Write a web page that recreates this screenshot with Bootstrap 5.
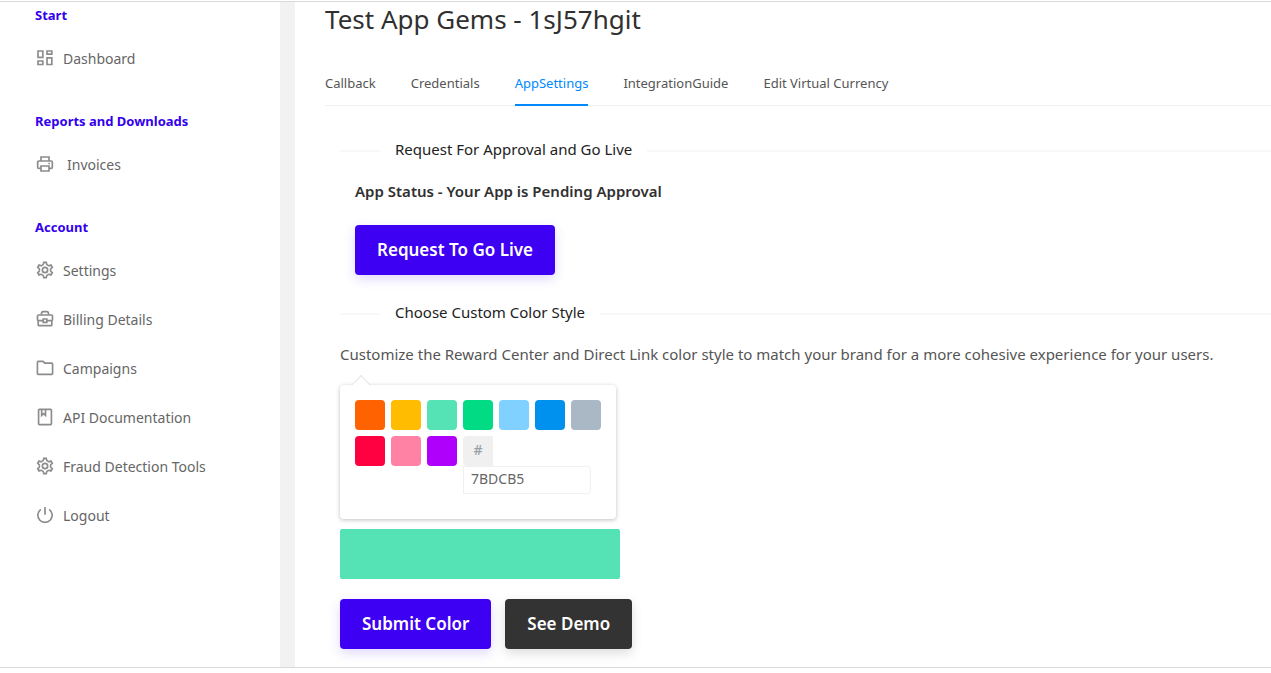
<!DOCTYPE html>
<html lang="en">
<head>
<meta charset="utf-8">
<meta name="viewport" content="width=device-width, initial-scale=1">
<title>Test App Gems - App Settings</title>
<link href="https://cdn.jsdelivr.net/npm/bootstrap@5.3.0/dist/css/bootstrap.min.css" rel="stylesheet">
<style>
  body { font-family: "Noto Sans", "Open Sans", sans-serif; font-size: 15px; line-height: 22px; color: #555; background: #fff; }
  .app-shell { margin-top: 1px; border-top: 1px solid #d9d9d9; border-bottom: 1px solid #d9d9d9; overflow: hidden; }
  .side-menu { width: 295px; border-right: 15px solid #f2f2f2; padding: 0 35px; font-size: 14px; }
  .side-heading { font-size: 13px; font-weight: 700; line-height: 18px; color: #3300ee; margin: 0; padding: 29px 0 10px; }
  .side-heading:first-child { padding-top: 4px; }
  .side-link { display: flex; align-items: center; gap: 8px; height: 49px; color: #666; text-decoration: none; white-space: nowrap; }
  .side-link:hover { color: #3d00f2; }
  .side-link svg { width: 20px; height: 20px; flex: none; fill: none; stroke: #8c8c8c; stroke-width: 2; margin-bottom: 2px; }
  .main-area { padding-left: 30px; min-width: 0; }
  .page-title { font-size: 26px; line-height: 34px; font-weight: 400; color: #303030; margin: 0 0 37px; }
  .app-tabs { gap: 35px; border-bottom: 1px solid #f0f0f0; font-size: 13px; line-height: 20px; }
  .app-tabs .nav-link { color: #555; padding: 0 0 11px; border-bottom: 2px solid transparent; margin-bottom: -1px; }
  .app-tabs .nav-link.active { color: #0088ff; border-color: #0088ff; }
  .panel-body { padding: 32px 0 18px 15px; }
  .rule-title { display: flex; align-items: center; gap: 15px; margin: 0; font-size: 15px; line-height: 22px; font-weight: 400; color: #222; white-space: nowrap; }
  .rule-title::before, .rule-title::after { content: ""; height: 2px; margin-top: 4px; background: #f8f8f8; }
  .rule-title::before { width: 40px; }
  .rule-title::after { flex: 1; }
  .status-block { padding: 20px 15px 26px; }
  .status-text { font-weight: 600; color: #303030; margin-bottom: 23px; }
  .btn-app { height: 50px; padding: 0 22px; border: 0; border-radius: 4px; font-size: 17px; font-weight: 600; color: #fff; background: #3d00f2; box-shadow: 0 4px 12px rgba(61, 0, 242, .16); }
  .btn-app:hover { color: #fff; background: #3200cc; }
  .btn-dark-app { background: #333; box-shadow: 0 4px 12px rgba(0, 0, 0, .14); }
  .btn-dark-app:hover { background: #222; }
  .action-row { gap: 14px; }
  .picker { position: relative; width: 276px; padding: 15px 15px 25px; border-radius: 4px; background: #fff; box-shadow: 0 1px 4px rgba(0, 0, 0, .25); margin: 20px 0 10px; }
  .picker::before { content: ""; position: absolute; left: 14px; top: -7px; width: 14px; height: 14px; background: #fff; border: solid #e5e5e5; border-width: 1px 0 0 1px; transform: rotate(45deg); }
  .swatches { display: flex; flex-wrap: wrap; gap: 6px; }
  .swatch { width: 30px; height: 30px; padding: 0; border: 0; border-radius: 4px; }
  .hex-field { width: 128px; }
  .hex-field label { display: block; width: 30px; height: 30px; line-height: 28px; text-align: center; font-size: 14px; font-weight: 500; color: #98a1a4; background: #f0f0f0; border-radius: 4px 0 0 4px; }
  .hex-field input { display: block; width: 128px; height: 28px; padding: 0 7px 4px; border: 1px solid #f0f0f0; border-radius: 0 4px 4px 0; font-size: 14px; color: #666; }
  .color-preview { width: 280px; height: 50px; border-radius: 2px; background: #55e3b5; margin-bottom: 20px; }
</style>
<script src="https://cdn.jsdelivr.net/npm/bootstrap@5.3.0/dist/js/bootstrap.bundle.min.js" defer></script>
</head>
<body>
<div class="app-shell d-flex">
  <nav class="side-menu flex-shrink-0" aria-label="Main menu">
    <h2 class="side-heading">Start</h2>
    <a class="side-link" href="#"><svg viewBox="0 0 24 24"><path d="M3.600 3.600h5.800v7.600H3.600zM14.400 3.600h5.800v3.800h-5.800zM3.600 15.600h5.800v4.200H3.600zM14.400 11.800h5.800v8h-5.800z"/></svg>Dashboard</a>
    <h2 class="side-heading">Reports and Downloads</h2>
    <a class="side-link" href="#"><svg viewBox="0 0 24 24"><path d="M7.200 8V3.600h9.600V8M7 17.200H4.500q-1.300 0-1.300-1.300V9.700q0-1.300 1.300-1.300h15q1.300 0 1.300 1.300v6.200q0 1.300-1.300 1.300H17M7.200 14.400h9.600v6H7.200zM16 11.400h2"/></svg><span class="ps-1">Invoices</span></a>
    <h2 class="side-heading">Account</h2>
    <a class="side-link" href="#"><svg viewBox="0 0 24 24"><defs><path id="tooth" d="M8.600 6.100Q9.900 5.800 10.100 4.700l.4-1.900h3l.4 1.900q.2 1.100 1.500 1.400"/><g id="gear"><use href="#tooth"/><use href="#tooth" transform="rotate(60 12 12)"/><use href="#tooth" transform="rotate(120 12 12)"/><use href="#tooth" transform="rotate(180 12 12)"/><use href="#tooth" transform="rotate(240 12 12)"/><use href="#tooth" transform="rotate(300 12 12)"/><circle cx="12" cy="12" r="3.200"/></g></defs><use href="#gear"/></svg>Settings</a>
    <a class="side-link" href="#"><svg viewBox="0 0 24 24"><path d="M7.800 7.200V5.400Q7.800 3.200 10 3.200h4q2.200 0 2.200 2.200v1.800M9.800 14H4.200q-1.200 0-1.200-1.200V8.400q0-1.200 1.200-1.200h15.600q1.200 0 1.200 1.200v4.400q0 1.200-1.200 1.200h-5.600M3.800 14v4.800q0 1.200 1.200 1.200h14q1.200 0 1.200-1.200V14M9.800 12h4.400v4H9.800z"/></svg>Billing Details</a>
    <a class="side-link" href="#"><svg viewBox="0 0 24 24"><path d="M2.900 5q0-1 1-1h5.700l2.200 2.200h8.300q1 0 1 1v11.500q0 1-1 1H3.900q-1 0-1-1z"/></svg>Campaigns</a>
    <a class="side-link" href="#"><svg viewBox="0 0 24 24"><path d="M4.300 3.900q0-1 1-1h13.400q1 0 1 1v16.200q0 1-1 1H5.300q-1 0-1-1zM8 3v7l2.300-2 2.300 2V3"/></svg>API Documentation</a>
    <a class="side-link" href="#"><svg viewBox="0 0 24 24"><use href="#gear"/></svg>Fraud Detection Tools</a>
    <a class="side-link" href="#"><svg viewBox="0 0 24 24"><path d="M12 2.500v9.300M7 5.200a8.600 8.600 0 1 0 10 0"/></svg>Logout</a>
  </nav>
  <main class="main-area flex-grow-1">
    <h1 class="page-title">Test App Gems - 1sJ57hgit</h1>
    <ul class="nav app-tabs">
      <li class="nav-item"><a class="nav-link" href="#">Callback</a></li>
      <li class="nav-item"><a class="nav-link" href="#">Credentials</a></li>
      <li class="nav-item"><a class="nav-link active" aria-current="page" href="#">AppSettings</a></li>
      <li class="nav-item"><a class="nav-link" href="#">IntegrationGuide</a></li>
      <li class="nav-item"><a class="nav-link" href="#">Edit Virtual Currency</a></li>
    </ul>
    <div class="panel-body">
      <h2 class="rule-title">Request For Approval and Go Live</h2>
      <div class="status-block">
        <p class="status-text">App Status - Your App is Pending Approval</p>
        <button type="button" class="btn btn-app d-block">Request To Go Live</button>
      </div>
      <h2 class="rule-title">Choose Custom Color Style</h2>
      <p class="mb-0 mt-3 pt-1">Customize the Reward Center and Direct Link color style to match your brand for a more cohesive experience for your users.</p>
      <div class="picker">
        <div class="swatches">
          <button type="button" class="swatch" style="background:#ff6200" aria-label="Orange"></button>
          <button type="button" class="swatch" style="background:#ffbc00" aria-label="Amber"></button>
          <button type="button" class="swatch" style="background:#55e3b5" aria-label="Mint"></button>
          <button type="button" class="swatch" style="background:#00db84" aria-label="Green"></button>
          <button type="button" class="swatch" style="background:#80d1ff" aria-label="Sky"></button>
          <button type="button" class="swatch" style="background:#0090ed" aria-label="Blue"></button>
          <button type="button" class="swatch" style="background:#aab7c5" aria-label="Gray"></button>
          <button type="button" class="swatch" style="background:#ff0040" aria-label="Red"></button>
          <button type="button" class="swatch" style="background:#ff82a5" aria-label="Pink"></button>
          <button type="button" class="swatch" style="background:#ae00fb" aria-label="Purple"></button>
          <div class="hex-field">
            <label for="hex">#</label>
            <input id="hex" type="text" value="7BDCB5">
          </div>
        </div>
      </div>
      <div class="color-preview"></div>
      <div class="d-flex action-row">
        <button type="submit" class="btn btn-app">Submit Color</button>
        <button type="button" class="btn btn-app btn-dark-app">See Demo</button>
      </div>
    </div>
  </main>
</div>
</body>
</html>
